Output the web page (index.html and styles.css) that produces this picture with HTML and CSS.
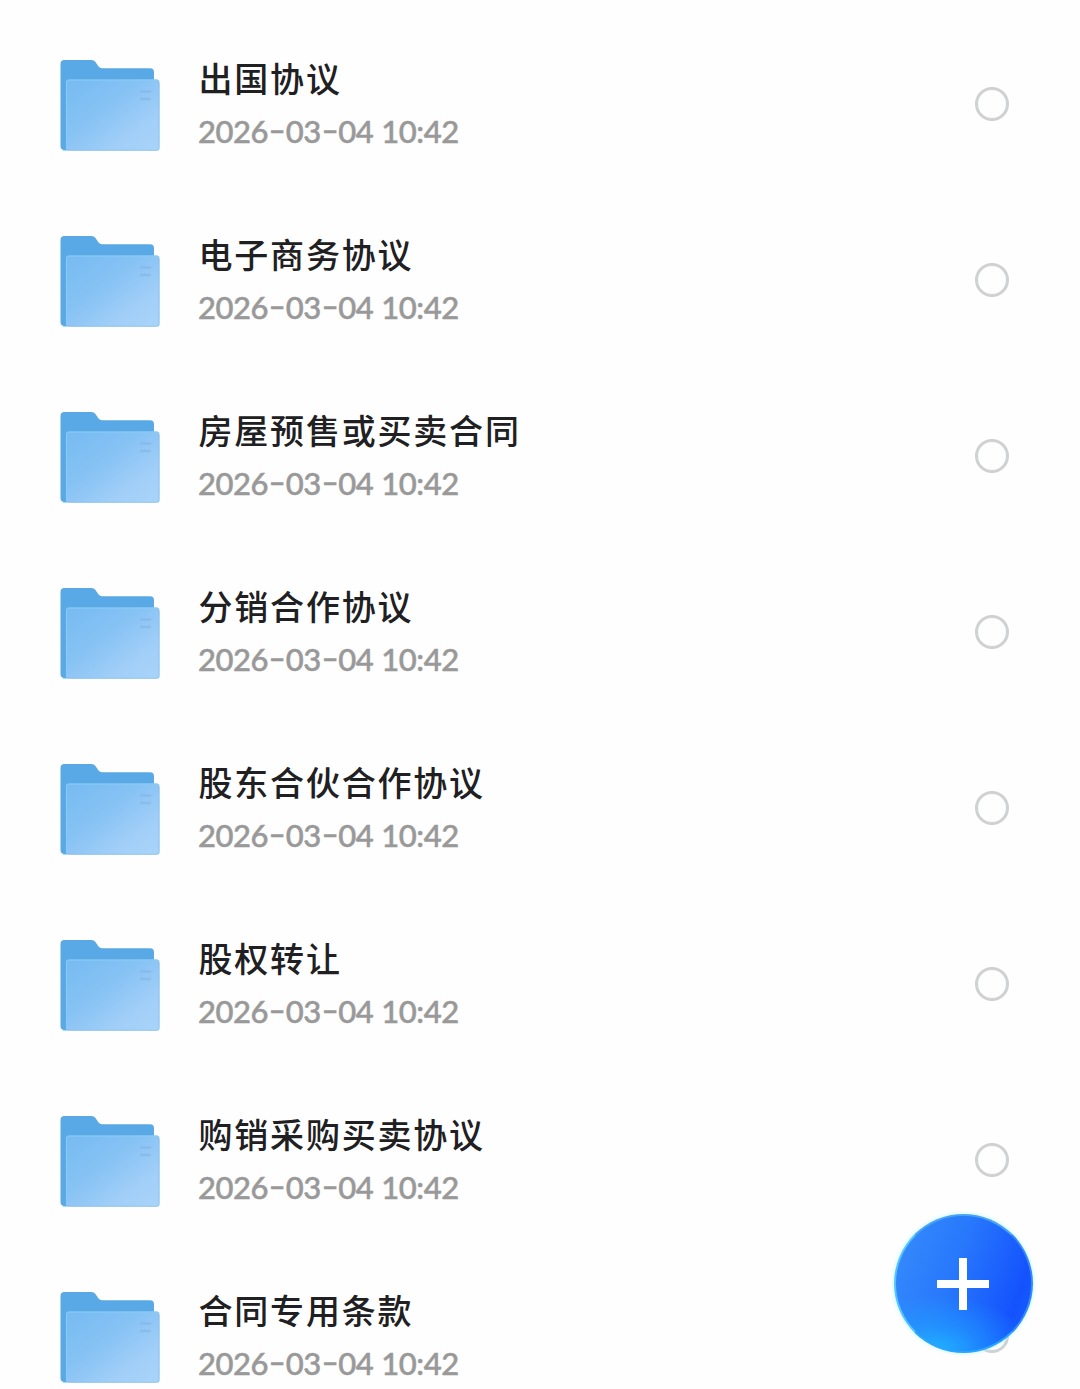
FILE: index.html
```html
<!DOCTYPE html>
<html lang="zh-CN">
<head>
<meta charset="utf-8">
<title>文件夹</title>
<link rel="stylesheet" href="styles.css">
</head>
<body>
<svg class="defs" width="0" height="0" aria-hidden="true">
  <defs>
    <linearGradient id="back" x1="0" y1="0" x2="0" y2="1"><stop offset="0" stop-color="#58a9e6"/><stop offset="1" stop-color="#5ba9e2"/></linearGradient>
    <linearGradient id="front" x1="0" y1="0" x2="1" y2="1"><stop offset="0" stop-color="#76bbf1"/><stop offset=".4" stop-color="#86c2f4"/><stop offset=".75" stop-color="#a2cff8"/><stop offset="1" stop-color="#a9d4fa"/></linearGradient>
    <symbol id="folder" viewBox="0 0 102 94">
      <path fill="url(#back)" d="M5.500 1h27q2.500 0 4 2l3 4.500q1.300 1.700 3.500 1.700H91q4 0 4 4V91H5.500q-4 0-4-4V5q0-4 4-4z"/>
      <rect x="7" y="20.500" width="93.500" height="71" rx="2.500" fill="url(#front)"/>
      <path d="M7.500 90V23q0-2 2-2h88q2 0 2 2" fill="none" stroke="#8bcbf7" stroke-width="1"/>
      <path d="M4 91.300h94q2 0 2-2.300V24" fill="none" stroke="#7eb9e9" stroke-width="1" opacity=".7"/>
      <path d="M81 32.500h11M81 40h11" stroke="#83b2e2" stroke-width="2.600" opacity=".5"/>
    </symbol>
  </defs>
</svg>
<main class="list">
  <div class="row"><svg class="folder"><use href="#folder"/></svg><div class="info"><div class="name">出国协议</div><div class="date"><span>2026<i>-</i>03<i>-</i>04</span><span>10:42</span></div></div><span class="radio"></span></div>
  <div class="row"><svg class="folder"><use href="#folder"/></svg><div class="info"><div class="name">电子商务协议</div><div class="date"><span>2026<i>-</i>03<i>-</i>04</span><span>10:42</span></div></div><span class="radio"></span></div>
  <div class="row"><svg class="folder"><use href="#folder"/></svg><div class="info"><div class="name">房屋预售或买卖合同</div><div class="date"><span>2026<i>-</i>03<i>-</i>04</span><span>10:42</span></div></div><span class="radio"></span></div>
  <div class="row"><svg class="folder"><use href="#folder"/></svg><div class="info"><div class="name">分销合作协议</div><div class="date"><span>2026<i>-</i>03<i>-</i>04</span><span>10:42</span></div></div><span class="radio"></span></div>
  <div class="row"><svg class="folder"><use href="#folder"/></svg><div class="info"><div class="name">股东合伙合作协议</div><div class="date"><span>2026<i>-</i>03<i>-</i>04</span><span>10:42</span></div></div><span class="radio"></span></div>
  <div class="row"><svg class="folder"><use href="#folder"/></svg><div class="info"><div class="name">股权转让</div><div class="date"><span>2026<i>-</i>03<i>-</i>04</span><span>10:42</span></div></div><span class="radio"></span></div>
  <div class="row"><svg class="folder"><use href="#folder"/></svg><div class="info"><div class="name">购销采购买卖协议</div><div class="date"><span>2026<i>-</i>03<i>-</i>04</span><span>10:42</span></div></div><span class="radio"></span></div>
  <div class="row"><svg class="folder"><use href="#folder"/></svg><div class="info"><div class="name">合同专用条款</div><div class="date"><span>2026<i>-</i>03<i>-</i>04</span><span>10:42</span></div></div><span class="radio"></span></div>
</main>
<button class="add" aria-label="新建"><svg viewBox="0 0 54 54"><path d="M27 1v52M1 27h52" stroke="#fff" stroke-width="8"/></svg></button>
</body>
</html>
```
FILE: styles.css
```css
* { box-sizing: border-box; }
body { margin: 0; height: 1389px; overflow: hidden; position: relative; background: #fefefe; font-family: Lato, "Noto Sans CJK SC", sans-serif; }
.defs { display: block; height: 0; }
.list { padding-top: 16px; }
.row { height: 176px; display: flex; align-items: center; padding: 0 71px 0 59px; }
.folder { width: 102px; height: 94px; flex: none; margin-top: 3px; }
.info { flex: 1; margin-left: 37.5px; }
.name { font: 500 34px/52px "Noto Sans CJK SC", sans-serif; letter-spacing: 1.8px; color: #202022; white-space: nowrap; }
.date { height: 52px; padding-top: 1px; display: flex; gap: 8px; font-size: 31px; font-weight: 500; line-height: 52px; letter-spacing: -0.45px; color: #999; -webkit-text-stroke: 0.5px #999; white-space: nowrap; margin-left: -0.5px; }
.date i { display: inline-block; width: 17.5px; font-style: normal; text-align: center; transform: translateY(-2px) scaleX(1.5); }
.radio { width: 34px; height: 34px; flex: none; border: 3px solid #d0d1d2; border-radius: 50%; }
.add { position: absolute; left: 894px; top: 1214px; width: 139px; height: 139px; padding: 0 1px 0 0; border: 2px solid; border-radius: 50%; display: flex; align-items: center; justify-content: center; background: radial-gradient(ellipse 70% 40% at 30% 98%, #20b0ff 0%, rgba(32,160,255,.6) 45%, rgba(32,140,255,0) 100%), linear-gradient(110deg, #3488fb 10%, #2878fc 42%, #1452fd 82%, #1766fd 100%); background-origin: border-box; border-color: #46a4f4 #338af8 #2aa5fc #53c4fc; box-shadow: 0 0 4px #b9f3ff; }
.add svg { width: 54px; height: 54px; }
```
